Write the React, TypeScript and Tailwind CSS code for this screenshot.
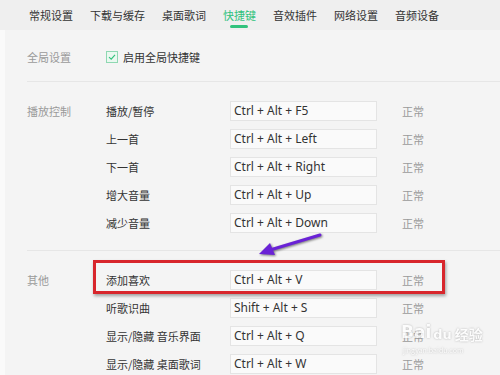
import React from 'react';

const tabs = ['常规设置', '下载与缓存', '桌面歌词', '快捷键', '音效插件', '网络设置', '音频设备'];

const playRows = [
    { name: '播放/暂停', keys: 'Ctrl + Alt + F5' },
    { name: '上一首', keys: 'Ctrl + Alt + Left' },
    { name: '下一首', keys: 'Ctrl + Alt + Right' },
    { name: '增大音量', keys: 'Ctrl + Alt + Up' },
    { name: '减少音量', keys: 'Ctrl + Alt + Down' },
];

const otherRows = [
    { name: '添加喜欢', keys: 'Ctrl + Alt + V' },
    { name: '听歌识曲', keys: 'Shift + Alt + S' },
    { name: '显示/隐藏 音乐界面', keys: 'Ctrl + Alt + Q' },
    { name: '显示/隐藏 桌面歌词', keys: 'Ctrl + Alt + W' },
];

function ShortcutRow({ label, name, keys }: { label?: string; name: string; keys: string }) {
    return (
        <div className="flex items-center h-[20px]">
            <div className="w-[79px] text-[11px] text-[#9a9a9a]">{label}</div>
            <div className="w-[124px] text-[11px] text-[#333]">{name}</div>
            <div className="w-[147px] h-[20px] flex items-center pl-[3px] bg-[#fafafa] border border-[#e4e4e4] text-[12px] text-[#333] font-['Noto_Sans',sans-serif]">
                {keys}
            </div>
            <div className="ml-[25px] text-[11px] text-[#9a9a9a]">正常</div>
        </div>
    );
}

function Section({ label, rows }: { label: string; rows: { name: string; keys: string }[] }) {
    return (
        <div className="flex flex-col gap-[8px] pt-[19px] pb-[17px]">
            {rows.map((r, i) => (
                <ShortcutRow key={r.name} label={i === 0 ? label : undefined} name={r.name} keys={r.keys} />
            ))}
        </div>
    );
}

export default function App() {
    return (
        <div className="relative w-[500px] h-[375px] overflow-hidden bg-[#f4f4f4] font-['Noto_Sans_CJK_SC','Noto_Sans',sans-serif]">
            <div className="h-[30px] bg-[#efefef] flex items-center pl-[29px] gap-[17px]">
                {tabs.map((t) => (
                    <div key={t} className="relative text-[11px] leading-none">
                        <span className={t === '快捷键' ? 'text-[#31c27c]' : 'text-[#333]'}>{t}</span>
                        {t === '快捷键' && (
                            <div className="absolute left-[7px] top-[15px] w-[18px] h-[3px] rounded-full bg-[#31c27c]" />
                        )}
                    </div>
                ))}
            </div>
            <div className="flex h-[345px]">
                <div className="w-[5px] bg-[#fafafa]" />
                <div className="flex-1 pl-[22px]">
                    <div className="flex items-center h-[20px] mt-[17px] mb-[14px]">
                        <div className="w-[79px] text-[11px] text-[#9a9a9a]">全局设置</div>
                        <div className="w-[12px] h-[12px] border border-[#8fd8b2] bg-[#eaf8f0] flex items-center justify-center">
                            <svg width="8" height="8" viewBox="0 0 8 8">
                                <path d="M1 4.2 L3.2 6.2 L7 1.8" fill="none" stroke="#31c27c" strokeWidth="1.1" />
                            </svg>
                        </div>
                        <div className="ml-[5px] text-[11px] text-[#333]">启用全局快捷键</div>
                    </div>
                    <div className="h-px bg-[#e6e6e6]" />
                    <Section label="播放控制" rows={playRows} />
                    <div className="h-px bg-[#e6e6e6]" />
                    <Section label="其他" rows={otherRows} />
                </div>
            </div>

            {/* annotation box */}
            <div className="absolute left-[93px] top-[260px] w-[352px] h-[34px] border-[3px] border-[#d8262c] shadow-[1px_2px_3px_rgba(0,0,0,0.35)]" />

            {/* annotation arrow */}
            <svg className="absolute left-[250px] top-[228px]" width="80" height="34" viewBox="0 0 80 34">
                <g filter="drop-shadow(1px 1px 1px rgba(0,0,0,0.5))">
                    <path d="M70 7 L20 22" stroke="#6a22d6" strokeWidth="3" strokeLinecap="round" />
                    <path d="M9 26 L20 15 L25 27 Z" fill="#6a22d6" />
                </g>
            </svg>

            {/* watermark */}
            <div className="absolute left-[401px] top-[324px] flex flex-col items-start opacity-80 pointer-events-none">
                <div className="flex items-end text-white font-bold leading-none [text-shadow:0_0_2px_#999] font-['DejaVu_Sans',sans-serif]">
                    <span className="text-[17px]">Bai</span>
                    <span className="ml-[2px] text-[13px]">du</span>
                    <span className="ml-[3px] text-[14px] font-['Noto_Sans_CJK_SC',sans-serif]">经验</span>
                </div>
                <div className="text-[7px] text-white [text-shadow:0_0_2px_#999] mt-[4px] ml-[2px]">jingyan.baidu.com</div>
            </div>
        </div>
    );
}
